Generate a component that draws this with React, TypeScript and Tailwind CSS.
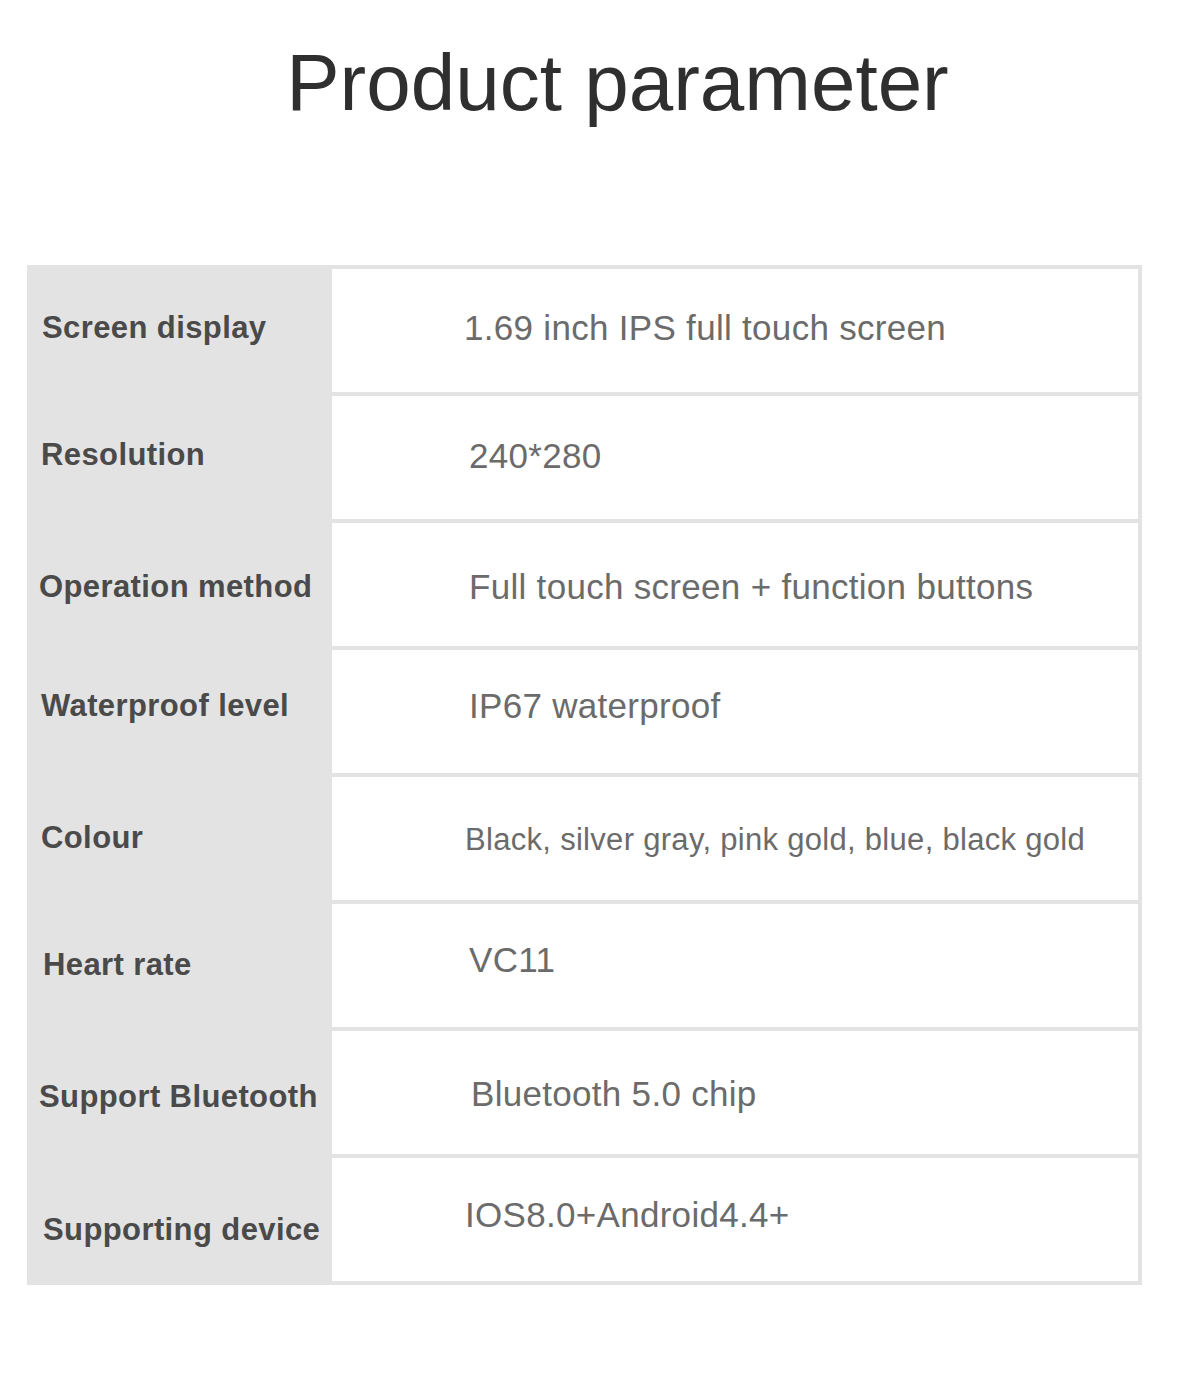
const rows = [
  { label: "Screen display", value: "1.69 inch IPS full touch screen", lc: "pt-[43px] pl-[15px]", vc: "pt-[41px] pl-[132px] text-[35px]" },
  { label: "Resolution", value: "240*280", lc: "pt-[43px] pl-[14px]", vc: "pt-[42px] pl-[137px] text-[35px]" },
  { label: "Operation method", value: "Full touch screen + function buttons", lc: "pt-[48px] pl-[12px]", vc: "pt-[46px] pl-[137px] text-[35px]" },
  { label: "Waterproof level", value: "IP67 waterproof", lc: "pt-[40px] pl-[14px]", vc: "pt-[38px] pl-[137px] text-[35px]" },
  { label: "Colour", value: "Black, silver gray, pink gold, blue, black gold", lc: "pt-[45px] pl-[14px]", vc: "pt-[47px] pl-[133px] text-[31px]" },
  { label: "Heart rate", value: "VC11", lc: "pt-[45px] pl-[16px]", vc: "pt-[38px] pl-[137px] text-[35px]" },
  { label: "Support Bluetooth", value: "Bluetooth 5.0 chip", lc: "pt-[50px] pl-[12px]", vc: "pt-[45px] pl-[139px] text-[35px]" },
  { label: "Supporting device", value: "IOS8.0+Android4.4+", lc: "pt-[56px] pl-[16px]", vc: "pt-[39px] pl-[133px] text-[35px]" },
];

export default function App() {
  return (
    <div className="w-[1200px] h-[1390px] bg-white font-['Liberation_Sans',Arial,sans-serif]">
      {/* Title */}
      <h1 className="pt-[43px] pl-[35px] text-center text-[80px] leading-none text-[#2f2f2f]">
        Product parameter
      </h1>

      {/* Parameter table */}
      <div className="ml-[27px] mt-[142px] w-[1115px] bg-[#e3e3e3] py-[4px] pr-[4px] flex flex-col gap-[4px]">
        {rows.map((r) => (
          <div key={r.label} className="flex h-[123px]">
            <div className={`w-[305px] shrink-0 text-[31px] leading-none font-bold tracking-[0.4px] text-[#4a4a4a] whitespace-nowrap ${r.lc}`}>
              {r.label}
            </div>
            <div className={`flex-1 bg-white leading-none tracking-[0.3px] text-[#6b6b6b] whitespace-nowrap ${r.vc}`}>
              {r.value}
            </div>
          </div>
        ))}
      </div>
    </div>
  );
}
